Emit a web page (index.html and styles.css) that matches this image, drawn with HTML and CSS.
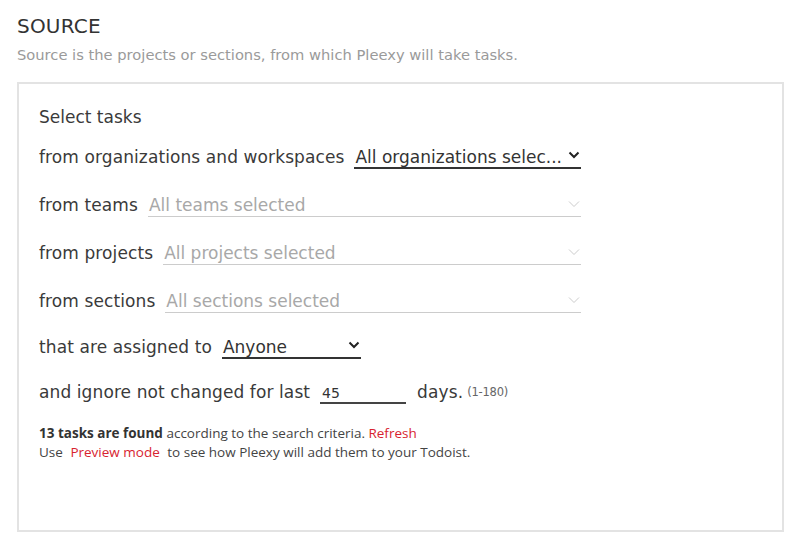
FILE: index.html
```html
<!DOCTYPE html>
<html>
<head>
<meta charset="utf-8">
<link rel="stylesheet" href="styles.css">
</head>
<body>
<h2 class="title">SOURCE</h2>
<p class="subtitle">Source is the projects or sections, from which Pleexy will take tasks.</p>
<div class="box">
  <div class="heading">Select tasks</div>
  <div class="row first">
    <span class="label">from organizations and workspaces</span>
    <div class="select active grow"><span class="value">All organizations selec...</span>
      <svg class="chev" width="12" height="8" viewBox="0 0 12 8"><path d="M1.5 1.5 L6 6 L10.5 1.5" fill="none" stroke="#222" stroke-width="2"/></svg></div>
  </div>
  <div class="row">
    <span class="label">from teams</span>
    <div class="select disabled grow"><span class="value">All teams selected</span>
      <svg class="chev" width="12" height="8" viewBox="0 0 12 8"><path d="M1 1.5 L6 6.5 L11 1.5" fill="none" stroke="#ccc" stroke-width="1"/></svg></div>
  </div>
  <div class="row">
    <span class="label">from projects</span>
    <div class="select disabled grow"><span class="value">All projects selected</span>
      <svg class="chev" width="12" height="8" viewBox="0 0 12 8"><path d="M1 1.5 L6 6.5 L11 1.5" fill="none" stroke="#ccc" stroke-width="1"/></svg></div>
  </div>
  <div class="row">
    <span class="label">from sections</span>
    <div class="select disabled grow"><span class="value">All sections selected</span>
      <svg class="chev" width="12" height="8" viewBox="0 0 12 8"><path d="M1 1.5 L6 6.5 L11 1.5" fill="none" stroke="#ccc" stroke-width="1"/></svg></div>
  </div>
  <div class="row assign-row">
    <span class="label">that are assigned to</span>
    <div class="select active assignee"><span class="value">Anyone</span>
      <svg class="chev" width="12" height="8" viewBox="0 0 12 8"><path d="M1.5 1.5 L6 6 L10.5 1.5" fill="none" stroke="#222" stroke-width="2"/></svg></div>
  </div>
  <div class="row days-row">
    <span class="label">and ignore not changed for last</span>
    <div class="input">45</div>
    <span class="label days">days.</span>
    <span class="range">(1-180)</span>
  </div>
  <div class="info">
    <p><b>13 tasks are found</b> according to the search criteria. <a class="link">Refresh</a></p>
    <p>Use <a class="link pad">Preview mode</a> to see how Pleexy will add them to your Todoist.</p>
  </div>
</div>
</body>
</html>
```
FILE: styles.css
```css
* { box-sizing: border-box; }
body {
  margin: 0;
  padding: 14px 16px 0 17px;
  font-family: "DejaVu Sans", sans-serif;
  color: #3a3a3a;
  background: #fff;
}
.title {
  margin: 0;
  font-size: 20px;
  line-height: 24px;
  font-weight: 400;
  color: #333;
  letter-spacing: 0.2px;
}
.subtitle {
  margin: 6px 0 0;
  font-size: 14.7px;
  line-height: 22px;
  color: #9a9a9a;
}
.box {
  margin-top: 16px;
  height: 450px;
  border: 2px solid #e3e3e3;
  padding: 20px 20px;
}
.heading {
  font-size: 17px;
  line-height: 26px;
  color: #3a3a3a;
}
.row {
  display: flex;
  align-items: flex-end;
  width: 542px;
  height: 34px;
  margin-top: 14px;
}
.row.first { margin-top: 5px; }
.row.assign-row { margin-top: 12px; }
.row.days-row { height: 30px; margin-top: 15px; }
.label {
  font-size: 17px;
  line-height: 28px;
  color: #3a3a3a;
  white-space: nowrap;
  letter-spacing: 0.1px;
  margin-right: 10px;
  margin-bottom: -2px;
}
.select {
  display: flex;
  align-items: flex-end;
  height: 34px;
  border-bottom: 1px solid #ccc;
  padding: 0 1px;
}
.grow { flex: 1; }
.select .value {
  flex: 1;
  font-size: 17px;
  line-height: 28px;
  white-space: nowrap;
  margin-bottom: -3px;
}
.active { border-bottom: 2px solid #333; }
.active .value { color: #333; margin-bottom: -4px; }
.disabled .value { color: #a8a8a8; }
.assignee { width: 139px; }
.chev { flex: none; margin-right: 0; margin-bottom: 8px; }
.input {
  width: 86px;
  height: 30px;
  border-bottom: 2px solid #444;
  font-size: 14px;
  line-height: 28px;
  padding: 5px 0 0 2px;
  color: #333;
  margin-right: 11px;
}
.days { margin-right: 4px; }
.range {
  font-size: 11.5px;
  line-height: 28px;
  color: #666;
  letter-spacing: -0.2px;
  margin-bottom: -2px;
}
.info {
  margin-top: 20px;
  font-family: "Open Sans", sans-serif;
  font-size: 13.5px;
  color: #444;
}
.info p { margin: 0; line-height: 19px; }
.info b { font-weight: 700; color: #333; }
.link { color: #d8232f; }
.pad { margin: 0 4px; }
```
